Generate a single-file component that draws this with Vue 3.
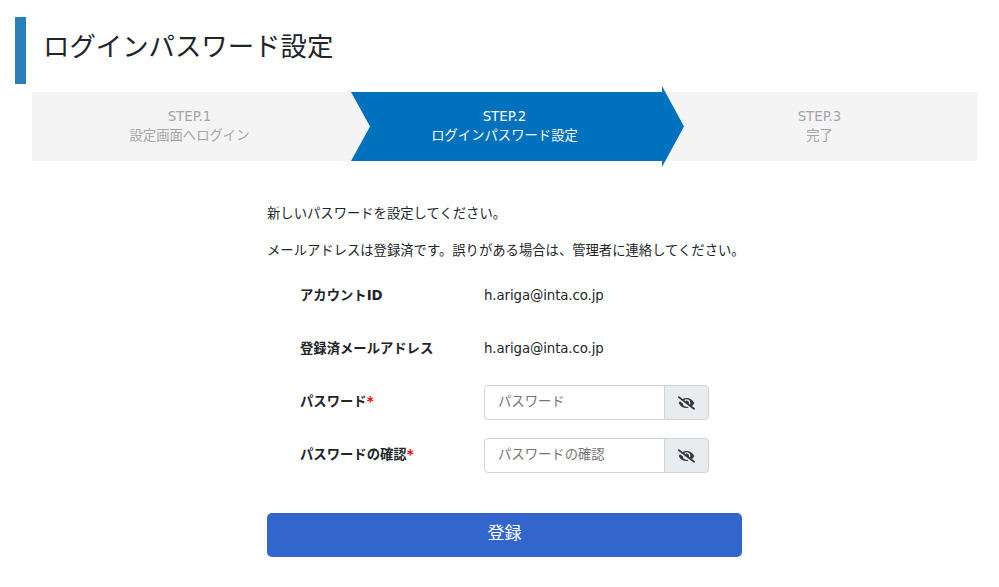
<script setup>
const steps = [
  { no: 'STEP.1', label: '設定画面へログイン', cls: 'first' },
  { no: 'STEP.2', label: 'ログインパスワード設定', cls: 'active' },
  { no: 'STEP.3', label: '完了', cls: 'last' }
]
const info = [
  { label: 'アカウントID', value: 'h.ariga@inta.co.jp' },
  { label: '登録済メールアドレス', value: 'h.ariga@inta.co.jp' }
]
const pw = [
  { label: 'パスワード', ph: 'パスワード' },
  { label: 'パスワードの確認', ph: 'パスワードの確認' }
]
</script>

<template>
  <div class="page">
    <h1 class="title">ログインパスワード設定</h1>
    <div class="steps">
      <div v-for="s in steps" :key="s.no" class="step" :class="s.cls">
        <div>{{ s.no }}</div>
        <div>{{ s.label }}</div>
      </div>
    </div>
    <div class="body">
      <p class="msg m1">新しいパスワードを設定してください。</p>
      <p class="msg m2">メールアドレスは登録済です。誤りがある場合は、管理者に連絡してください。</p>
      <div v-for="r in info" :key="r.label" class="row">
        <div class="lab">{{ r.label }}</div>
        <div class="val">{{ r.value }}</div>
      </div>
      <div v-for="r in pw" :key="r.label" class="row">
        <div class="lab">{{ r.label }}<span class="req">*</span></div>
        <div class="group">
          <input class="inp" type="password" :placeholder="r.ph" />
          <button class="eye" type="button" aria-label="表示切替">
            <svg width="17" height="14" viewBox="0 0 640 512"><path fill="#343a40" d="M320 400c-75.85 0-137.25-58.71-142.9-133.11L72.2 185.82c-13.79 17.3-26.48 35.59-36.72 55.59a32.35 32.35 0 0 0 0 29.19C89.71 376.41 197.07 448 320 448c26.91 0 52.87-4 77.89-10.46L346 397.39a144.13 144.13 0 0 1-26 2.61zm313.82 58.1l-110.55-85.44a331.25 331.25 0 0 0 81.25-102.07 32.35 32.35 0 0 0 0-29.19C550.29 135.59 442.93 64 320 64a308.15 308.15 0 0 0-147.32 37.7L45.46 3.37A16 16 0 0 0 23 6.18L3.37 31.45A16 16 0 0 0 6.18 53.9l588.36 454.73a16 16 0 0 0 22.46-2.81l19.64-25.27a16 16 0 0 0-2.82-22.45zm-183.72-142l-39.3-30.38A94.75 94.75 0 0 0 416 256a94.76 94.76 0 0 0-121.31-92.21A47.65 47.65 0 0 1 304 192a46.64 46.64 0 0 1-1.54 10l-73.61-56.89A142.31 142.31 0 0 1 320 112a143.92 143.92 0 0 1 144 144c0 21.63-5.29 41.79-13.9 60.11z"/></svg>
          </button>
        </div>
      </div>
      <button class="submit" type="button">登録</button>
    </div>
  </div>
</template>

<style>
html, body { margin: 0; background: #fff; }
</style>

<style scoped>
.page {
  width: 999px;
  height: 587px;
  overflow: hidden;
  box-sizing: border-box;
  padding-top: 17px;
  font-family: "DejaVu Sans", "Noto Sans CJK JP", sans-serif;
  font-size: 13.33px;
  color: #212529;
}
.title {
  margin: 0 0 0 15px;
  height: 67px;
  box-sizing: border-box;
  border-left: 11px solid #2a7fb8;
  padding-left: 17px;
  font-size: 26.4px;
  font-weight: 400;
  line-height: 60px;
  color: #212529;
}
.steps {
  margin: 8px 22px 0 32px;
  height: 69px;
  background: #f4f4f4;
  display: grid;
  grid-template-columns: 315px 1fr 315px;
}
.step {
  position: relative;
  display: flex;
  flex-direction: column;
  align-items: center;
  justify-content: center;
  line-height: 19px;
  padding-bottom: 1px;
  box-sizing: border-box;
  color: #a4a4a8;
  text-align: center;
}
.step.first::after {
  content: "";
  position: absolute;
  left: 100%;
  top: -6px;
  bottom: -6px;
  width: 4px;
  background: #f4f4f4;
  clip-path: polygon(0 0, 100% 6px, 100% calc(100% - 6px), 0 100%);
}
.step.active {
  color: #fff;
  z-index: 1;
}
.step.active::before {
  content: "";
  position: absolute;
  left: 4px;
  right: -22px;
  top: -6px;
  bottom: -6px;
  z-index: -1;
  background: #0071bc;
  clip-path: polygon(0 6px, calc(100% - 22px) 6px, calc(100% - 22px) 0, 100% 50%, calc(100% - 22px) 100%, calc(100% - 22px) calc(100% - 6px), 0 calc(100% - 6px), 19px 50%);
}
.body {
  margin-left: 267px;
  width: 475px;
  padding-top: 43px;
}
.msg { margin: 0; line-height: 20px; white-space: nowrap; }
.m2 { margin-top: 17px; }
.row {
  display: flex;
  align-items: center;
  padding-left: 33px;
  height: 35px;
  margin-top: 18px;
}
.lab { width: 184px; font-weight: 700; padding-bottom: 4px; white-space: nowrap; }
.val { padding-bottom: 2px; letter-spacing: -0.1px; }
.req { color: #e00; }
.group { display: flex; width: 225px; height: 35px; }
.inp {
  flex: 1;
  min-width: 0;
  box-sizing: border-box;
  border: 1px solid #ced4da;
  border-radius: 4px 0 0 4px;
  padding: 0 13px 3px;
  font: inherit;
  outline: none;
}
.inp::placeholder { color: #757575; }
.eye {
  width: 45px;
  box-sizing: border-box;
  margin-left: -1px;
  border: 1px solid #ced4da;
  border-radius: 0 4px 4px 0;
  background: #e9ecef;
  display: flex;
  align-items: center;
  justify-content: center;
  padding: 0;
}
.submit {
  display: block;
  width: 475px;
  height: 44px;
  margin-top: 40px;
  padding-bottom: 9px;
  border: 0;
  border-radius: 5px;
  background: #3366cc;
  color: #fff;
  font: inherit;
  font-size: 17px;
}
</style>
